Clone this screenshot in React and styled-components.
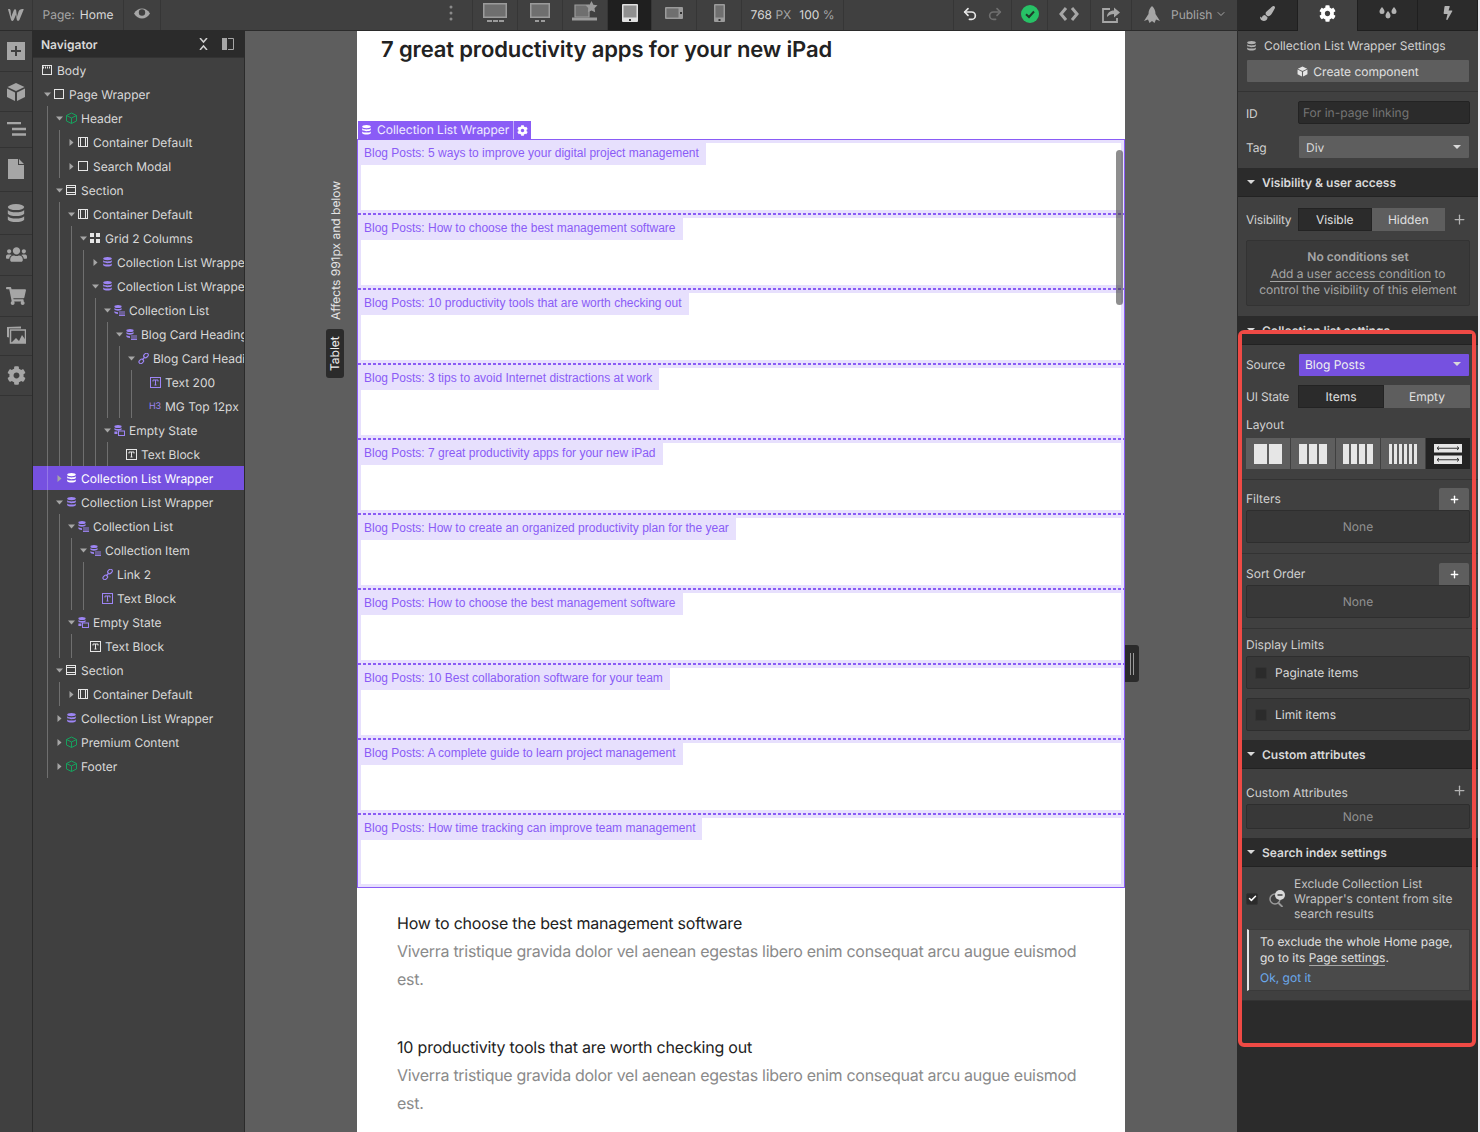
import React from "react";
import styled, { createGlobalStyle } from "styled-components";
import { FaCog, FaBolt, FaUsers, FaShoppingCart, FaPaintBrush } from "react-icons/fa";
import { Undo2, Redo2, ChevronDown, Check, Plus } from "lucide-react";

const Global = createGlobalStyle`
  html, body { margin: 0; padding: 0; background: #5e5e5e; }
  * { box-sizing: border-box; }
  body { font-family: Inter, "Liberation Sans", sans-serif; font-size: 12px; color: #d9d9d9; text-rendering: geometricPrecision; }
`;

const Shell = styled.div`display:flex;width:1480px;height:1132px;overflow:hidden;position:relative;`;
const Main = styled.div`display:flex;flex-direction:column;width:1237px;height:100%;`;
const TopBar = styled.header`display:flex;align-items:stretch;height:31px;flex:none;background:#404040;border-bottom:1px solid #2b2b2b;`;
const BarCell = styled.div`
  display:flex;align-items:center;justify-content:center;height:30px;flex:none;
  width:${p => p.$w}px;gap:${p => p.$gap || 0}px;padding-bottom:${p => p.$up ?? 2}px;
  border-right:${p => p.$noLine ? "none" : "1px solid #363636"};
  background:${p => p.$active ? "#1f1f1f" : "transparent"};
`;
const PublishCell = styled.div`display:flex;align-items:center;height:30px;flex:none;width:105px;padding:0 0 2px 12px;gap:8px;`;
const Spacer = styled.div`flex:${p => p.$w ? "none" : 1};width:${p => p.$w || 0}px;border-right:${p => p.$line ? "1px solid #363636" : "none"};`;
const Muted = styled.span`color:#a6a6a6;`;
const Bright = styled.span`color:#d9d9d9;`;
const PublishText = styled.span`color:#a6a6a6;margin:0 -5px 0 3px;`;
const Body = styled.div`display:flex;flex:1;min-height:0;`;
const Rail = styled.nav`width:33px;flex:none;background:#404040;border-right:1px solid #2b2b2b;display:flex;flex-direction:column;`;
const RailItem = styled.div`height:${p => p.$h}px;display:flex;align-items:center;justify-content:center;border-bottom:1px solid #333;color:#a6a6a6;flex:none;padding-bottom:${p => p.$up || 0}px;`;

const Navigator = styled.aside`width:212px;flex:none;background:#404040;border-right:1px solid #2b2b2b;overflow:hidden;`;
const NavHead = styled.div`height:27px;background:#2b2b2b;display:flex;align-items:center;padding:0 10px 0 8px;font-weight:600;color:#d9d9d9;border-bottom:1px solid #333;`;
const NavTitle = styled.span`flex:1;`;
const NavTools = styled.div`display:flex;gap:14px;align-items:center;`;
const Row = styled.div`
  position:relative;display:flex;align-items:center;height:24px;white-space:nowrap;overflow:hidden;
  padding-left:${p => p.$level * 12}px;
  background:${p => p.$sel ? "#7651e0" : "transparent"};
  color:${p => p.$sel ? "#fff" : "#d9d9d9"};
`;
const Guide = styled.i`position:absolute;top:0;bottom:0;width:1px;left:${p => p.$x}px;background:${p => p.$sel ? "rgba(255,255,255,.22)" : "#6f6f6f"};`;
const CaretBox = styled.span`width:9px;margin-left:-2px;flex:none;display:flex;justify-content:center;align-items:center;`;
const IconBox = styled.span`width:14px;flex:none;display:flex;justify-content:center;align-items:center;`;
const RowText = styled.span`margin-left:3px;`;
const H3Tag = styled.span`font-size:9px;color:#9d85f5;letter-spacing:0;line-height:1;`;

const Canvas = styled.main`flex:1;background:#5e5e5e;position:relative;overflow:hidden;padding-left:112px;`;
const Page = styled.div`width:768px;background:#fff;height:100%;position:relative;`;
const HeadBlock = styled.div`height:108px;padding:1px 0 0 24px;`;
const Heading = styled.h1`margin:0;font-size:22px;line-height:36px;font-weight:600;color:#222;letter-spacing:-.14px;`;
const Wrapper = styled.section`position:relative;border:1px solid #8a5cf6;height:749px;display:flex;flex-direction:column;`;
const WrapTag = styled.div`
  position:absolute;left:0;top:-19px;height:18px;display:flex;align-items:center;background:#8a5cf6;color:#f0ecff;
`;
const WrapName = styled.span`display:flex;align-items:center;gap:6px;padding:0 4px 1px 4px;height:100%;border-right:1px solid #c4aefa;`;
const WrapGear = styled.span`width:17px;display:flex;justify-content:center;align-items:center;`;
const Items = styled.div`display:flex;flex-direction:column;height:100%;`;
const Item = styled.div`
  position:relative;height:75px;flex:none;background:#fff;
  border:solid #e7e0fd;border-width:4px 3px 4px 3px;
  &:first-child{height:74px;border-top-width:3px;}
  &:last-child{height:73px;border-bottom-width:3px;}
  &:not(:first-child)::before{
    content:"";position:absolute;left:-3px;right:-3px;top:-5px;height:2px;
    background:repeating-linear-gradient(90deg,#8a5cf6 0 3px,transparent 3px 5px);
  }
`;
const ItemLabel = styled.span`
  display:inline-block;height:22px;line-height:21px;padding:0 7px 0 3px;background:#e7e0fd;color:#8a5cf6;
  font-family:"Liberation Sans",Arial,sans-serif;font-size:12px;text-rendering:auto;
`;
const ScrollThumb = styled.div`position:absolute;left:758px;top:10px;width:7px;height:155px;border-radius:4px;background:rgba(60,60,60,.58);`;
const Handle = styled.div`
  position:absolute;left:880px;top:614px;width:14px;height:37px;background:#2b2b2b;border-radius:0 3px 3px 0;
  display:flex;justify-content:center;align-items:center;gap:2px;
  &::before,&::after{content:"";width:1px;height:22px;background:#9a9a9a;}
`;
const Affects = styled.div`
  position:absolute;left:84px;top:149px;height:140px;writing-mode:vertical-rl;transform:rotate(180deg);color:#e4e4e4;font-size:12px;line-height:14px;white-space:nowrap;
`;
const TabletChip = styled.div`
  position:absolute;left:81px;top:298px;width:18px;height:49px;background:#2b2b2b;border-radius:3px;color:#eee;
  writing-mode:vertical-rl;transform:rotate(180deg);display:flex;align-items:center;justify-content:center;line-height:1;
`;
const Articles = styled.div`padding:21px 40px 0;`;
const Article = styled.article`margin-bottom:40px;`;
const ArtTitle = styled.h3`margin:0;font-size:16px;line-height:28px;font-weight:400;color:#222;letter-spacing:-.19px;`;
const ArtText = styled.p`margin:0;font-size:16px;line-height:28px;color:#8a8a8a;letter-spacing:-.285px;`;

const Panel = styled.aside`width:241px;flex:none;background:#2b2b2b;border-left:1px solid #2b2b2b;display:flex;flex-direction:column;font-size:12px;color:#d0d0d0;`;
const Edge = styled.div`width:2px;flex:none;background:#e9e9ee;`;
const Tabs = styled.div`display:flex;height:31px;flex:none;`;
const Tab = styled.div`
  flex:1;display:flex;align-items:center;justify-content:center;padding-bottom:4px;
  background:${p => p.$active ? "#404040" : "#2b2b2b"};
  color:${p => p.$active ? "#fff" : "#b3b3b3"};
  border-right:1px solid #1f1f1f;border-bottom:${p => p.$active ? "none" : "1px solid #1f1f1f"};
`;
const Sect = styled.div`
  background:#404040;padding:${p => p.$pad || "0 8px"};flex:none;
  border-bottom:${p => p.$line === false ? "none" : "1px solid #333"};
`;
const SetHead = styled.div`height:29px;display:flex;align-items:center;gap:8px;padding-left:1px;color:#d0d0d0;`;
const WideBtn = styled.div`height:22px;margin-left:1px;margin-right:1px;background:#5e5e5e;display:flex;align-items:center;justify-content:center;gap:5px;color:#e0e0e0;border-radius:1px;`;
const FieldRow = styled.div`display:flex;align-items:center;height:${p => p.$h || 22}px;margin-top:${p => p.$mt || 0}px;`;
const FieldLabel = styled.span`width:52px;flex:none;color:#d0d0d0;white-space:nowrap;letter-spacing:-.2px;padding:${p => p.$dn ? "2px 0 0" : p.$upward ? "0 0 2px" : "0"};`;
const Input = styled.div`flex:1;height:100%;background:#2b2b2b;border:1px solid #232323;border-radius:2px;color:#757575;padding-left:4px;display:flex;align-items:center;`;
const Select = styled.div`
  flex:1;height:100%;margin:0 1px;background:${p => p.$purple ? "#7651e0" : "#5e5e5e"};color:${p => p.$purple ? "#f0f0f0" : "#d9d9d9"};
  padding:${p => p.$purple ? "0 8px 2px 6px" : "0 8px 0 7px"};display:flex;align-items:center;justify-content:space-between;border-radius:1px;
`;
const Tri = styled.i`width:0;height:0;border:4px solid transparent;border-top:4px solid ${p => p.$c || "#d9d9d9"};border-bottom:0;display:block;`;
const SectionHead = styled.div`
  height:29px;flex:none;background:#2b2b2b;border-bottom:1px solid #222;display:flex;align-items:center;padding-left:9px;gap:7px;
  font-weight:600;color:#d9d9d9;white-space:nowrap;
`;
const Seg = styled.div`display:flex;height:100%;flex:${p => p.$w ? "none" : 1};width:${p => p.$w ? p.$w + "px" : "auto"};`;
const SegBtn = styled.div`
  flex:1;display:flex;align-items:center;justify-content:center;
  background:${p => p.$on ? "#2b2b2b" : "#5e5e5e"};color:#e0e0e0;
  border:1px solid ${p => p.$on ? "#232323" : "#5e5e5e"};
`;
const PlusBtn = styled.div`margin-left:auto;display:flex;color:#b3b3b3;margin-right:3px;`;
const InfoBox = styled.div`
  height:66px;margin-top:9px;padding-top:2px;border:1px solid #333;border-radius:2px;background:#3a3a3a;text-align:center;color:#a6a6a6;
  display:flex;flex-direction:column;align-items:center;justify-content:center;line-height:16.5px;
`;
const InfoTitle = styled.b`font-weight:600;`;
const Linked = styled.span`border-bottom:1px solid #a6a6a6;line-height:15px;`;
const LayoutLabel = styled.div`height:18px;margin-top:7px;display:flex;align-items:center;color:#d0d0d0;`;
const LayoutRow = styled.div`display:flex;height:31px;margin-top:5px;gap:1px;`;
const LayoutBtn = styled.div`
  flex:1;display:flex;align-items:center;justify-content:center;gap:${p => p.$gap ?? 2}px;
  background:${p => p.$on ? "#232323" : "#5e5e5e"};
`;
const Bar = styled.i`display:block;background:#e6e6e6;width:${p => p.$w}px;height:20px;`;
const AddRow = styled.div`display:flex;justify-content:space-between;align-items:center;height:22px;`;
const AddText = styled.span`padding-bottom:2px;`;
const AddBtn = styled.div`width:30px;height:22px;margin-right:1px;background:#5e5e5e;color:#fff;display:flex;align-items:center;justify-content:center;border-radius:2px 2px 0 0;`;
const NoneBox = styled.div`height:${p => p.$h}px;background:#383838;border:1px solid #2e2e2e;border-radius:2px;display:flex;align-items:center;justify-content:center;color:#929292;`;
const LimitLabel = styled.div`height:21px;padding-bottom:2px;display:flex;align-items:center;color:#d0d0d0;`;
const CheckRow = styled.div`
  height:33px;margin-top:${p => p.$mt || 0}px;background:#383838;border:1px solid #2e2e2e;border-radius:2px;display:flex;align-items:center;padding-left:8px;gap:8px;color:#d9d9d9;
`;
const CheckSq = styled.span`width:12px;height:12px;flex:none;border-radius:2px;background:#2b2b2b;border:1px solid #333;display:flex;align-items:center;justify-content:center;color:#fff;`;
const AttrRow = styled.div`display:flex;justify-content:space-between;height:23px;align-items:center;color:#d0d0d0;`;
const AttrPlus = styled.span`display:flex;color:#b3b3b3;margin:0 3px 4px 0;`;
const Exclude = styled.div`display:flex;align-items:center;line-height:15px;color:#c4c4c4;`;
const ExcludeIcon = styled.span`width:17px;margin:0 9px 0 10px;display:flex;flex:none;`;
const Note = styled.div`
  height:62px;margin-top:8px;margin-left:1px;background:#4a4a4a;border:1px solid #3a3a3a;border-left:2px solid #e6e6e6;padding:4px 0 0 11px;
  line-height:16px;color:#e0e0e0;
`;
const OkLink = styled.div`color:#6aa9ec;margin-top:4px;`;
const Callout = styled.div`
  position:absolute;left:1238px;top:330px;width:238px;height:717px;border:4px solid #ef4a45;border-radius:6px;pointer-events:none;
  &::before{content:"";position:absolute;left:0;right:0;top:0;height:10px;background:#2b2b2b;}
`;

const S = ({ w = 12, h = 12, vb, children }) => <svg width={w} height={h} viewBox={vb || `0 0 ${w} ${h}`} style={{ display: "block", flex: "none" }}>{children}</svg>;
const Caret = ({ d, c = "#a6a6a6" }) => d === "down"
  ? <S w={7} h={5}><path d="M0 .5h7L3.5 4.5z" fill={c} /></S>
  : d === "right" ? <S w={5} h={7}><path d="M.5 0v7L4.5 3.5z" fill={c} /></S> : null;

const DB = ({ c = "#9d85f5", s = 9 }) => <S w={s} h={s + 1} vb="0 0 9 10"><g fill={c}><ellipse cx="4.5" cy="1.6" rx="4.3" ry="1.6" /><path d="M.2 3.2c1 1.6 7.6 1.6 8.6 0v1.9c-1 1.6-7.6 1.6-8.6 0z" /><path d="M.2 6.4c1 1.6 7.6 1.6 8.6 0v1.9c-1 1.6-7.6 1.6-8.6 0z" /></g></S>;
const CubeOutline = () => <S w={11} h={12}><path d="M5.5 1 10.5 3.5v5.500L5.500 11.500.5 9V3.500zM.5 3.500 5.500 6l5-2.500M5.500 6v5.500" fill="none" stroke="#16a05d" strokeWidth="1" /></S>;
const CubeSolid = ({ c = "#a6a6a6", s = 20 }) => <S w={s} h={s} vb="0 0 20 20"><path d="M10 1 18.500 5 10 9 1.500 5z M1 6.500 9 10.500V19L1 15z M19 6.500 11 10.500V19l8-4z" fill={c} /></S>;

const Ico = ({ t }) => {
  const W = "#e6e6e6", P = "#9d85f5";
  switch (t) {
    case "page": return <S w={10} h={10}><rect x=".5" y=".5" width="9" height="9" fill="none" stroke={W} /><path d="M1 2.500h8" stroke={W} strokeWidth="2" strokeDasharray="1 1" /></S>;
    case "box": return <S w={10} h={10}><rect x=".5" y=".5" width="9" height="9" fill="none" stroke={W} /></S>;
    case "cube": return <CubeOutline />;
    case "cont": return <S w={10} h={10}><rect x=".5" y=".5" width="9" height="9" fill="none" stroke={W} /><path d="M2.500 0v10M7.500 0v10" stroke={W} /></S>;
    case "sect": return <S w={10} h={10}><rect x=".5" y=".5" width="9" height="9" fill="none" stroke={W} /><path d="M0 2.500h10M0 7.500h10" stroke={W} /></S>;
    case "grid": return <S w={10} h={10}><path d="M0 0h4v4H0zM6 0h4v4H6zM0 6h4v4H0zM6 6h4v4H6z" fill={W} /></S>;
    case "db": return <DB />;
    case "dbw": return <DB c="#fff" />;
    case "list": return <S w={11} h={11}><ellipse cx="4" cy="1.600" rx="3.600" ry="1.500" fill={P} /><path d="M.4 3c.8 1.400 6.400 1.400 7.200 0v1.600c-.8 1.400-6.400 1.400-7.200 0zM.4 6c.4.8 1.500 1.100 3.600 1.200V9C2 9 .6 8.500.4 7.600z" fill={P} /><path d="M5 7h6M5 9h6M5 10.500h6" stroke={P} strokeWidth=".9" /></S>;
    case "empty": return <S w={11} h={11}><ellipse cx="4" cy="1.600" rx="3.600" ry="1.500" fill={P} /><path d="M.4 3c.8 1.400 6.400 1.400 7.200 0v1.600c-.8 1.400-6.400 1.400-7.200 0zM.4 6.500h3v2.500h-3z" fill={P} /><rect x="4.500" y="6" width="6" height="4.500" fill="none" stroke={P} /></S>;
    case "link": return <S w={11} h={11}><g fill="none" stroke={P} strokeWidth="1.100"><rect x="5.200" y=".4" width="5" height="3.600" rx="1.800" transform="rotate(-45 7.700 2.200) translate(0 .4)" /><rect x=".8" y="6.600" width="5" height="3.600" rx="1.800" transform="rotate(-45 3.300 8.400)" /><path d="M4 7l3-3" /></g></S>;
    case "tp": return <S w={11} h={11}><rect x=".5" y=".5" width="10" height="10" fill="none" stroke={P} /><path d="M3 3h5v1.500M5.500 3v5M4.500 8h2M3 3v1.500" fill="none" stroke={P} /></S>;
    case "tw": return <S w={11} h={11}><rect x=".5" y=".5" width="10" height="10" fill="none" stroke={W} /><path d="M3 3h5v1.500M5.500 3v5M4.500 8h2M3 3v1.500" fill="none" stroke={W} /></S>;
    case "h3": return <H3Tag>H3</H3Tag>;
    default: return null;
  }
};

const TREE = [
  [0, null, "page", "Body"], [1, "down", "box", "Page Wrapper"], [2, "down", "cube", "Header"],
  [3, "right", "cont", "Container Default"], [3, "right", "box", "Search Modal"], [2, "down", "sect", "Section"],
  [3, "down", "cont", "Container Default"], [4, "down", "grid", "Grid 2 Columns"],
  [5, "right", "db", "Collection List Wrapper"], [5, "down", "db", "Collection List Wrapper"],
  [6, "down", "list", "Collection List"], [7, "down", "list", "Blog Card Heading"], [8, "down", "link", "Blog Card Heading"],
  [9, null, "tp", "Text 200"], [9, null, "h3", "MG Top 12px"], [6, "down", "empty", "Empty State"], [7, null, "tw", "Text Block"],
  [2, "right", "dbw", "Collection List Wrapper", true], [2, "down", "db", "Collection List Wrapper"],
  [3, "down", "list", "Collection List"], [4, "down", "list", "Collection Item"], [5, null, "link", "Link 2"], [5, null, "tp", "Text Block"],
  [3, "down", "empty", "Empty State"], [4, null, "tw", "Text Block"], [2, "down", "sect", "Section"], [3, "right", "cont", "Container Default"],
  [2, "right", "db", "Collection List Wrapper"], [2, "right", "cube", "Premium Content"], [2, "right", "cube", "Footer"],
];

const ITEMS = [
  "5 ways to improve your digital project management", "How to choose the best management software",
  "10 productivity tools that are worth checking out", "3 tips to avoid Internet distractions at work",
  "7 great productivity apps for your new iPad", "How to create an organized productivity plan for the year",
  "How to choose the best management software", "10 Best collaboration software for your team",
  "A complete guide to learn project management", "How time tracking can improve team management",
];

const G1 = "#9b9b9b", G2 = "#6f6f6f";
const Dev1 = () => <S w={24} h={19}><rect x=".75" y=".75" width="22.500" height="13.500" fill={G2} stroke={G1} strokeWidth="1.500" /><path d="M4 18h5M10 18h5M16 18h5" stroke={G1} strokeWidth="2" /></S>;
const Dev2 = () => <S w={20} h={19}><rect x=".75" y=".75" width="18.500" height="13.500" fill={G2} stroke={G1} strokeWidth="1.500" /><path d="M5 18h4M11 18h4" stroke={G1} strokeWidth="2" /></S>;
const Dev3 = () => <S w={26} h={20} vb="0 0 26 20"><path d="M3 4h14v12H3z" fill={G2} stroke={G1} strokeWidth="1.200" /><path d="M0 16.500h25v3H0z" fill={G1} /><path d="M19.500 0l1.900 3.700 4.100.6-3 2.900.7 4.100-3.700-1.900-3.700 1.900.7-4.100-3-2.900 4.100-.6z" fill={G1} /></S>;
const Dev4 = () => <S w={16} h={18}><rect width="16" height="18" rx="1" fill="#e0e0e0" /><rect x="1.500" y="1.500" width="13" height="12" fill="#8f8f8f" /><rect x="7" y="15" width="2" height="2" fill="#333" /></S>;
const Dev5 = () => <S w={18} h={12}><rect width="18" height="12" rx="1" fill={G1} /><rect x="1.500" y="1.500" width="12" height="9" fill={G2} /><rect x="15" y="5" width="2" height="2" fill="#333" /></S>;
const Dev6 = () => <S w={11} h={18}><rect width="11" height="18" rx="1" fill={G1} /><rect x="1.500" y="1.500" width="8" height="12" fill={G2} /><rect x="4.500" y="15" width="2" height="2" fill="#333" /></S>;
const Logo = () => <S w={20} h={14}><path d="M2 2.200c1.600-.6 2.500 0 2.600 1.400l.5 6.400 2.600-6.600c.6-1.400 2.200-1.400 2.500 0l.7 6.500 1.700-5.400c.7-2 2.600-2.900 5.200-2.300l-4.200 10.400c-1 2-2.400 1.600-2.800.2l-.8-5-2.200 5c-.9 1.700-2.300 1.600-2.800 0z" fill="#a6a6a6" /></S>;
const Eye = () => <S w={16} h={11}><path d="M0 5.500C2 2 5 .5 8 .5s6 1.500 8 5c-2 3.500-5 5-8 5s-6-1.500-8-5z" fill="#a6a6a6" /><circle cx="8" cy="4.500" r="3.200" fill="#404040" /></S>;

export default function App() {
  return (
    <Shell>
      <Global />
      <Main>
        <TopBar>
          <BarCell $w={33}><Logo /></BarCell>
          <BarCell $w={91} $gap={5}><Muted>Page:</Muted><Bright>Home</Bright></BarCell>
          <BarCell $w={37} $up={4}><Eye /></BarCell>
          <Spacer />
          <BarCell $w={43} $up={5}><S w={4} h={16}><g fill="#8a8a8a"><circle cx="2" cy="2" r="1.500" /><circle cx="2" cy="8" r="1.500" /><circle cx="2" cy="14" r="1.500" /></g></S></BarCell>
          <BarCell $w={45} $up={5}><Dev1 /></BarCell>
          <BarCell $w={45} $up={5}><Dev2 /></BarCell>
          <BarCell $w={45} $up={8}><Dev3 /></BarCell>
          <BarCell $w={44} $active $up={4}><Dev4 /></BarCell>
          <BarCell $w={45} $up={4}><Dev5 /></BarCell>
          <BarCell $w={45} $up={4}><Dev6 /></BarCell>
          <BarCell $w={102} $gap={8}><span><Bright>768</Bright> <Muted>PX</Muted></span><span><Bright>100</Bright> <Muted>%</Muted></span></BarCell>
          <Spacer $w={110} $line />
          <BarCell $w={58} $gap={9}><Undo2 size={16} color="#e8e8e8" strokeWidth={2.500} /><Redo2 size={16} color="#6f6f6f" strokeWidth={2.500} /></BarCell>
          <BarCell $w={36}><S w={18} h={18}><circle cx="9" cy="9" r="9" fill="#27c166" /><path d="M5 9.300 8 12l5-5.500" fill="none" stroke="#1f3a2a" strokeWidth="2" /></S></BarCell>
          <BarCell $w={43}><S w={20} h={14}><path d="M7 1 2 7l5 6M13 1l5 6-5 6" fill="none" stroke="#a6a6a6" strokeWidth="3" /></S></BarCell>
          <BarCell $w={41}><S w={19} h={17}><path d="M8 3H1v13h14v-4" fill="none" stroke="#a6a6a6" strokeWidth="1.800" /><path d="M5 11c0-4 3-6.500 7-6.500V1.500l6 5-6 5V8c-3 0-5 1-7 3z" fill="#a6a6a6" /></S></BarCell>
          <PublishCell>
            <S w={16} h={17}><path d="M8 0c2.500 2 3.500 5 3.500 8l4.500 7-4-1.500-1.500 3.500-2.500-2-2.500 2L4 13.500 0 15l4.500-7C4.500 5 5.500 2 8 0z" fill="#a6a6a6" /></S>
            <PublishText>Publish</PublishText>
            <ChevronDown size={12} color="#a6a6a6" strokeWidth={2} />
          </PublishCell>
        </TopBar>
        <Body>
          <Rail>
            <RailItem $h={41}><S w={18} h={18}><rect width="18" height="18" fill="#a6a6a6" /><path d="M9 4v10M4 9h10" stroke="#404040" strokeWidth="2" /></S></RailItem>
            <RailItem $h={40}><CubeSolid /></RailItem>
            <RailItem $h={36} $up={2}><S w={19} h={14}><path d="M0 1h14M5 7h14M5 12.500h14" stroke="#a6a6a6" strokeWidth="2.400" /></S></RailItem>
            <RailItem $h={44} $up={2}><S w={16} h={20}><path d="M0 0h10v6h6v14H0zM11 0l5 5h-5z" fill="#a6a6a6" /></S></RailItem>
            <RailItem $h={43}><DB c="#a6a6a6" s={18} /></RailItem>
            <RailItem $h={41} $up={2}><FaUsers size={21} /></RailItem>
            <RailItem $h={41}><FaShoppingCart size={20} /></RailItem>
            <RailItem $h={39} $up={2}><S w={20} h={18}><path d="M1 1l14-.5v2H3v9L1 11z" fill="#a6a6a6" /><rect x="4.500" y="4" width="15" height="13" fill="#404040" stroke="#a6a6a6" strokeWidth="1.500" /><path d="M5 17l5-5 3 3 3-6 3.500 5v3z" fill="#a6a6a6" /></S></RailItem>
            <RailItem $h={40}><FaCog size={19} /></RailItem>
          </Rail>
          <Navigator>
            <NavHead>
              <NavTitle>Navigator</NavTitle>
              <NavTools>
                <S w={9} h={12}><path d="M1 0l3.500 4L8 0M1 12l3.500-4L8 12" fill="none" stroke="#d0d0d0" strokeWidth="1.500" /></S>
                <S w={12} h={12}><path d="M0 0h5v12H0z" fill="#a6a6a6" /><path d="M6 .5h5.500v11H6" fill="none" stroke="#a6a6a6" /></S>
              </NavTools>
            </NavHead>
            {TREE.map(([lvl, car, ico, text, sel], i) => (
              <Row key={i} $level={lvl} $sel={sel}>
                {Array.from({ length: Math.max(0, lvl - 1) }, (_, k) => <Guide key={k} $x={14 + 12 * k} $sel={sel} />)}
                <CaretBox><Caret d={car} /></CaretBox>
                <IconBox><Ico t={ico} /></IconBox>
                <RowText>{text}</RowText>
              </Row>
            ))}
          </Navigator>
          <Canvas>
            <Page>
              <HeadBlock><Heading>7 great productivity apps for your new iPad</Heading></HeadBlock>
              <Wrapper>
                <WrapTag>
                  <WrapName><DB c="#fff" />Collection List Wrapper</WrapName>
                  <WrapGear><FaCog size={11} color="#fff" /></WrapGear>
                </WrapTag>
                <Items>
                  {ITEMS.map((t, i) => <Item key={i}><ItemLabel>Blog Posts: {t}</ItemLabel></Item>)}
                </Items>
                <ScrollThumb />
              </Wrapper>
              <Articles>
                <Article>
                  <ArtTitle>How to choose the best management software</ArtTitle>
                  <ArtText>Viverra tristique gravida dolor vel aenean egestas libero enim consequat arcu augue euismod est.</ArtText>
                </Article>
                <Article>
                  <ArtTitle>10 productivity tools that are worth checking out</ArtTitle>
                  <ArtText>Viverra tristique gravida dolor vel aenean egestas libero enim consequat arcu augue euismod est.</ArtText>
                </Article>
              </Articles>
            </Page>
            <Handle />
            <Affects>Affects 991px and below</Affects>
            <TabletChip>Tablet</TabletChip>
          </Canvas>
        </Body>
      </Main>
      <Panel>
        <Tabs>
          <Tab><FaPaintBrush size={15} /></Tab>
          <Tab $active><FaCog size={17} /></Tab>
          <Tab><S w={18} h={12}><path d="M3 0c1.500 2 2.500 3 2.500 4.500a2.500 2.500 0 0 1-5 0C.5 3 1.500 2 3 0zM15 0c1.500 2 2.500 3 2.500 4.500a2.500 2.500 0 0 1-5 0C12.500 3 13.500 2 15 0zM9 4c1.500 2 2.500 3 2.500 5a2.500 2.500 0 0 1-5 0c0-2 1-3 2.500-5z" fill="#b3b3b3" /></S></Tab>
          <Tab><FaBolt size={14} /></Tab>
        </Tabs>
        <Sect $pad="0 8px 9px">
          <SetHead><DB c="#b3b3b3" />Collection List Wrapper Settings</SetHead>
          <WideBtn><CubeSolid c="#e6e6e6" s={11} />Create component</WideBtn>
        </Sect>
        <Sect $pad="9px 8px 10px" $line={false}>
          <FieldRow $h={23}><FieldLabel $dn>ID</FieldLabel><Input>For in-page linking</Input></FieldRow>
          <FieldRow $mt={12}><FieldLabel>Tag</FieldLabel><Select>Div<Tri /></Select></FieldRow>
        </Sect>
        <SectionHead><Tri />Visibility &amp; user access</SectionHead>
        <Sect $pad="11px 8px 10px" $line={false}>
          <FieldRow $h={23}>
            <FieldLabel>Visibility</FieldLabel>
            <Seg $w={147}><SegBtn $on>Visible</SegBtn><SegBtn>Hidden</SegBtn></Seg>
            <PlusBtn><Plus size={15} strokeWidth={2} /></PlusBtn>
          </FieldRow>
          <InfoBox>
            <InfoTitle>No conditions set</InfoTitle>
            <span><Linked>Add a user access condition</Linked> to</span>
            <span>control the visibility of this element</span>
          </InfoBox>
        </Sect>
        <SectionHead><Tri />Collection list settings</SectionHead>
        <Sect $pad="9px 8px 10px">
          <FieldRow><FieldLabel $upward>Source</FieldLabel><Select $purple>Blog Posts<Tri /></Select></FieldRow>
          <FieldRow $h={23} $mt={9}><FieldLabel>UI State</FieldLabel><Seg><SegBtn $on>Items</SegBtn><SegBtn>Empty</SegBtn></Seg></FieldRow>
          <LayoutLabel>Layout</LayoutLabel>
          <LayoutRow>
            <LayoutBtn><Bar $w={13} /><Bar $w={13} /></LayoutBtn>
            <LayoutBtn><Bar $w={8} /><Bar $w={8} /><Bar $w={8} /></LayoutBtn>
            <LayoutBtn><Bar $w={6} /><Bar $w={6} /><Bar $w={6} /><Bar $w={6} /></LayoutBtn>
            <LayoutBtn $gap={2}><Bar $w={3} /><Bar $w={3} /><Bar $w={3} /><Bar $w={3} /><Bar $w={3} /><Bar $w={3} /></LayoutBtn>
            <LayoutBtn $on>
              <S w={28} h={20}><rect width="28" height="8.500" fill="#e6e6e6" /><rect y="11.500" width="28" height="8.500" fill="#e6e6e6" /><path d="M3 4.250h22M3 15.750h22M5 2.500 3 4.250 5 6M23 2.500l2 1.750L23 6M5 14l-2 1.750L5 17.500M23 14l2 1.750-2 1.750" fill="none" stroke="#333" /></S>
            </LayoutBtn>
          </LayoutRow>
        </Sect>
        <Sect $pad="8px 8px 10px">
          <AddRow><AddText>Filters</AddText><AddBtn><Plus size={11} strokeWidth={3} /></AddBtn></AddRow>
          <NoneBox $h={33}>None</NoneBox>
        </Sect>
        <Sect $pad="9px 8px 10px">
          <AddRow><AddText>Sort Order</AddText><AddBtn><Plus size={11} strokeWidth={3} /></AddBtn></AddRow>
          <NoneBox $h={33}>None</NoneBox>
        </Sect>
        <Sect $pad="6px 8px 9px" $line={false}>
          <LimitLabel>Display Limits</LimitLabel>
          <CheckRow><CheckSq />Paginate items</CheckRow>
          <CheckRow $mt={9}><CheckSq />Limit items</CheckRow>
        </Sect>
        <SectionHead><Tri />Custom attributes</SectionHead>
        <Sect $pad="12px 8px 9px" $line={false}>
          <AttrRow>Custom Attributes<AttrPlus><Plus size={15} strokeWidth={2} /></AttrPlus></AttrRow>
          <NoneBox $h={25}>None</NoneBox>
        </Sect>
        <SectionHead><Tri />Search index settings</SectionHead>
        <Sect $pad="9px 8px 9px">
          <Exclude>
            <CheckSq><Check size={9} strokeWidth={4} /></CheckSq>
            <ExcludeIcon><S w={17} h={17}><circle cx="7" cy="9" r="5" fill="none" stroke="#9a9a9a" strokeWidth="1.500" /><path d="M10.500 13l4 4" stroke="#9a9a9a" strokeWidth="1.800" /><circle cx="12" cy="5" r="5" fill="#d9d9d9" /><path d="M9.500 5h5" stroke="#404040" strokeWidth="1.500" /></S></ExcludeIcon>
            <span>Exclude Collection List<br />Wrapper's content from site<br />search results</span>
          </Exclude>
          <Note>
            To exclude the whole Home page,<br />go to its <Linked>Page settings</Linked>.
            <OkLink>Ok, got it</OkLink>
          </Note>
        </Sect>
      </Panel>
      <Edge />
      <Callout />
    </Shell>
  );
}
